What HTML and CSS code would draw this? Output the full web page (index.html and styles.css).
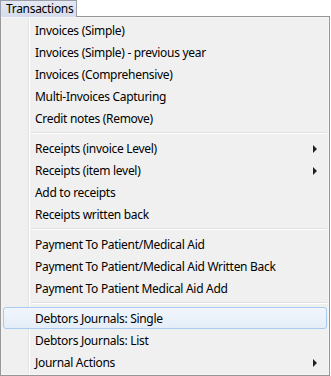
FILE: index.html
```html
<!DOCTYPE html>
<html lang="en">
<head>
    <meta charset="UTF-8">
    <title>Transactions</title>
    <link rel="stylesheet" href="styles.css">
</head>
<body>
    <div class="menubar">
        <span class="menu-title">Transactions</span>
    </div>
    <div class="menu">
        <div class="item">Invoices (Simple)</div>
        <div class="item">Invoices (Simple) - previous year</div>
        <div class="item">Invoices (Comprehensive)</div>
        <div class="item">Multi-Invoices Capturing</div>
        <div class="item">Credit notes (Remove)</div>
        <div class="sep"></div>
        <div class="item sub">Receipts (invoice Level)</div>
        <div class="item sub">Receipts (item level)</div>
        <div class="item">Add to receipts</div>
        <div class="item">Receipts written back</div>
        <div class="sep"></div>
        <div class="item">Payment To Patient/Medical Aid</div>
        <div class="item">Payment To Patient/Medical Aid Written Back</div>
        <div class="item">Payment To Patient Medical Aid Add</div>
        <div class="sep"></div>
        <div class="item active">Debtors Journals: Single</div>
        <div class="item">Debtors Journals: List</div>
        <div class="item sub">Journal Actions</div>
    </div>
</body>
</html>
```

FILE: styles.css
```css
body {
    margin: 0;
    background-color: #ffffff;
    font-family: "Noto Sans", "Open Sans", sans-serif;
    font-size: 12px;
    letter-spacing: -0.3px;
    color: #000000;
}

.menubar {
    height: 16px;
    display: flex;
}

.menu-title {
    box-sizing: border-box;
    width: 77px;
    height: 17px;
    padding: 0 0 0 5px;
    line-height: 15px;
    background: linear-gradient(#e3e8f3, #d6dceb);
    border: 1px solid #9a9ea8;
    border-bottom: none;
    position: relative;
    z-index: 1;
}

.menu {
    box-sizing: border-box;
    width: 330px;
    height: 360px;
    border: 1px solid #979797;
    padding: 2px 2px;
    background-color: #f0f0f0;
    background-image: linear-gradient(to right, transparent 27px, #e2e3e3 27px, #e2e3e3 28px, #ffffff 28px, #ffffff 29px, transparent 29px);
    box-shadow: inset 0 0 0 1px #f5f5f5;
}

.item {
    box-sizing: border-box;
    height: 22px;
    line-height: 21px;
    padding-left: 31px;
    position: relative;
    border: 1px solid transparent;
    border-radius: 3px;
}

.item.sub::after {
    content: "";
    position: absolute;
    right: 9px;
    top: 7px;
    border-left: 4px solid #222222;
    border-top: 4px solid transparent;
    border-bottom: 4px solid transparent;
}

.item.active {
    border-color: #a8cbf1;
    background: linear-gradient(#f2f6fb, #e4edf8);
}

.sep {
    height: 8px;
    margin-left: 28px;
    background-image: linear-gradient(#e0e0e0, #e0e0e0), linear-gradient(#ffffff, #ffffff);
    background-size: 100% 1px, 100% 1px;
    background-position: 0 3px, 0 4px;
    background-repeat: no-repeat;
}
```
